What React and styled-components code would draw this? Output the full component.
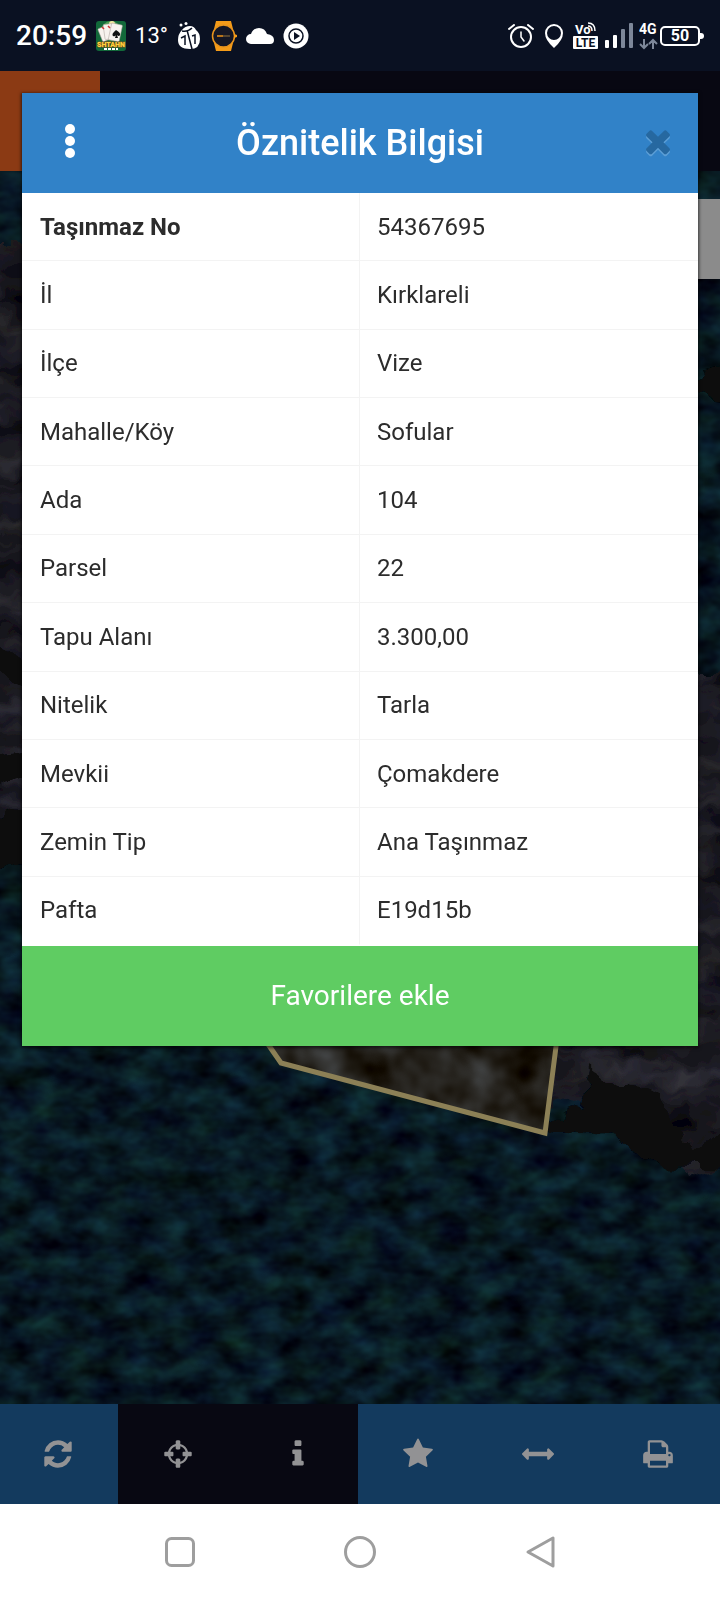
import React from "react";
import styled, { createGlobalStyle } from "styled-components";

const GlobalStyle = createGlobalStyle`
  *, *::before, *::after { box-sizing: border-box; }
  body { margin: 0; background: #070f14; font-family: Roboto, "Noto Sans", sans-serif; }
  button { font: inherit; border: 0; margin: 0; padding: 0; cursor: pointer; }
  svg { display: block; }
`;

const Screen = styled.div`
  min-height: 100vh;
  display: flex;
  flex-direction: column;
`;

const StatusBar = styled.header`
  height: 71px;
  flex: none;
  display: flex;
  align-items: center;
  justify-content: space-between;
  padding: 0 16px;
  background: #0a1122;
  color: #fff;
`;

const StatusGroup = styled.div`
  display: flex;
  align-items: center;
  gap: ${(p) => p.$gap}px;
`;

const Clock = styled.time`
  font-size: 28px;
  line-height: 32px;
  font-weight: 500;
`;

const Temperature = styled.span`
  font-size: 22px;
  line-height: 32px;
`;

const Battery = styled.span`
  position: relative;
  display: flex;
  align-items: center;
  justify-content: center;
  width: 40px;
  height: 20px;
  margin-right: 4px;
  border: 2px solid #fff;
  border-radius: 5px;
  font-size: 16px;
  line-height: 16px;
  font-weight: 700;

  &::after {
    content: "";
    position: absolute;
    right: -6px;
    top: 5px;
    width: 4px;
    height: 6px;
    border-radius: 0 3px 3px 0;
    background: #fff;
  }
`;

const Viewport = styled.div`
  position: relative;
  flex: 1;
  display: flex;
  flex-direction: column;
`;

const AppHeader = styled.div`
  height: 100px;
  flex: none;
  background: #080812;
`;

const MenuTile = styled.div`
  width: 100px;
  height: 100px;
  background: #8b3a14;
`;

const MapArea = styled.div`
  position: relative;
  flex: 1;
  min-height: 1000px;
  overflow: hidden;
  background: #07161c;
`;

const MapDrawing = styled.svg`
  position: absolute;
  inset: 0;
  width: 100%;
  height: 100%;
`;

const MapControl = styled.div`
  position: absolute;
  top: 28px;
  right: 0;
  width: 80px;
  height: 80px;
  background: #8b8b8b;
`;

const Toolbar = styled.nav`
  flex: none;
  display: grid;
  grid-template-columns: repeat(6, 1fr);
  height: 100px;
  margin-left: -2px;
  padding-right: 2px;
  background: #133a5e;
`;

const ToolButton = styled.button`
  display: flex;
  align-items: center;
  justify-content: center;
  background: ${(p) => (p.$dark ? "#080812" : "#133a5e")};
  color: #929294;
`;

const Dialog = styled.section`
  position: absolute;
  top: 22px;
  left: 22px;
  right: 22px;
  background: #fff;
  box-shadow: 0 1px 3px 1px rgba(0, 0, 0, 0.6);
`;

const DialogHeader = styled.div`
  display: grid;
  grid-template-columns: 96px 1fr 80px;
  align-items: center;
  height: 100px;
  background: #3182c8;
  color: #fff;
`;

const DialogTitle = styled.h1`
  margin: 0;
  padding-right: 16px;
  text-align: center;
  font-size: 36px;
  line-height: 40px;
  font-weight: 500;
`;

const HeaderButton = styled.button`
  display: flex;
  align-items: center;
  justify-content: center;
  height: 100px;
  && { padding-bottom: 4px; }
  background: transparent;
  color: ${(p) => p.$color};
`;

const CloseGlyph = styled.span`
  filter: drop-shadow(0 2px 0 #5c9ed6);
`;

const DialogBody = styled.div`
  padding-bottom: 1px;
`;

const Attributes = styled.table`
  width: 100%;
  height: 752px;
  table-layout: fixed;
  border-collapse: separate;
  border-spacing: 0;
  color: #2c2c2c;
`;

const cell = `
  padding: 0 0 0 18px;
  text-align: left;
  font-size: 24px;
  line-height: 32px;
  border-bottom: 1px solid #f3f3f3;
`;

const Name = styled.th`
  ${cell}
  font-weight: ${(p) => (p.$strong ? 700 : 400)};
  border-right: 1px solid #f3f3f3;
`;

const Value = styled.td`
  ${cell}
  padding-left: 17px;
`;

const Row = styled.tr`
  &:last-child > * {
    border-bottom-color: transparent;
  }
`;

const FavoriteButton = styled.button`
  display: block;
  width: 100%;
  height: 100px;
  background: #5fcc62;
  color: #fff;
  && { font-size: 28px; line-height: 32px; }
`;

const SystemNav = styled.nav`
  flex: none;
  display: flex;
  justify-content: center;
  height: 96px;
  background: #fff;
`;

const NavButton = styled.button`
  display: flex;
  align-items: center;
  justify-content: center;
  width: 25%;
  background: transparent;
`;

const icons = {
  refresh:
    "M1639 1056q0 5-1 7-64 268-268 434.500t-478 166.500q-146 0-282.500-55t-243.500-157l-129 129q-19 19-45 19t-45-19-19-45v-448q0-26 19-45t45-19h448q26 0 45 19t19 45-19 45l-137 137q71 66 161 102t187 36q134 0 250-65t186-179q11-17 53-117 8-23 30-23h192q13 0 22.500 9.500t9.500 22.500zm25-800v448q0 26-19 45t-45 19h-448q-26 0-45-19t-19-45 19-45l138-138q-148-137-349-137-134 0-250 65t-186 179q-11 17-53 117-8 23-30 23h-199q-13 0-22.500-9.500t-9.500-22.500v-7q65-268 270-434.500t480-166.500q146 0 284 55.500t245 156.500l130-129q19-19 45-19t45 19 19 45z",
  crosshairs:
    "M1325 1024h-109q-26 0-45-19t-19-45v-128q0-26 19-45t45-19h109q-32-108-112.500-188.500t-188.500-112.500v109q0 26-19 45t-45 19h-128q-26 0-45-19t-19-45v-109q-108 32-188.500 112.500t-112.500 188.500h109q26 0 45 19t19 45v128q0 26-19 45t-45 19h-109q32 108 112.500 188.500t188.500 112.500v-109q0-26 19-45t45-19h128q26 0 45 19t19 45v109q108-32 188.500-112.500t112.500-188.500zm339-192v128q0 26-19 45t-45 19h-143q-37 161-154.500 278.500t-278.500 154.500v143q0 26-19 45t-45 19h-128q-26 0-45-19t-19-45v-143q-161-37-278.500-154.500t-154.500-278.500h-143q-26 0-45-19t-19-45v-128q0-26 19-45t45-19h143q37-161 154.500-278.500t278.500-154.500v-143q0-26 19-45t45-19h128q26 0 45 19t19 45v143q161 37 278.500 154.500t154.500 278.500h143q26 0 45 19t19 45z",
  info: "M1216 1344v128q0 26-19 45t-45 19h-512q-26 0-45-19t-19-45v-128q0-26 19-45t45-19h64v-384h-64q-26 0-45-19t-19-45v-128q0-26 19-45t45-19h384q26 0 45 19t19 45v576h64q26 0 45 19t19 45zm-128-1152v192q0 26-19 45t-45 19h-256q-26 0-45-19t-19-45v-192q0-26 19-45t45-19h256q26 0 45 19t19 45z",
  star: "M1728 647q0 22-26 48l-363 354 86 500q1 7 1 20 0 21-10.500 35.500t-30.500 14.500q-19 0-40-12l-449-236-449 236q-22 12-40 12-21 0-31.500-14.500t-10.500-35.500q0-6 2-20l86-500-364-354q-25-27-25-48 0-37 56-46l502-73 225-455q19-41 49-41t49 41l225 455 502 73q56 9 56 46z",
  measure:
    "M1792 896q0 26-19 45l-256 256q-19 19-45 19t-45-19-19-45v-128h-1024v128q0 26-19 45t-45 19-45-19l-256-256q-19-19-19-45t19-45l256-256q19-19 45-19t45 19 19 45v128h1024v-128q0-26 19-45t45-19 45 19l256 256q19 19 19 45z",
  print:
    "M448 1536h896v-256h-896v256zm0-640h896v-384h-160q-40 0-68-28t-28-68v-160h-640v640zm1152 64q0-26-19-45t-45-19-45 19-19 45 19 45 45 19 45-19 19-45zm128 0v416q0 13-9.500 22.500t-22.500 9.500h-224v160q0 40-28 68t-68 28h-960q-40 0-68-28t-28-68v-160h-224q-13 0-22.500-9.500t-9.500-22.500v-416q0-79 56.500-135.500t135.500-56.500h64v-544q0-40 28-68t68-28h672q40 0 88 20t76 48l152 152q28 28 48 76t20 88v256h64q79 0 135.500 56.500t56.500 135.500z",
  close:
    "M1490 1322q0 40-28 68l-136 136q-28 28-68 28t-68-28l-294-294-294 294q-28 28-68 28t-68-28l-136-136q-28-28-28-68t28-68l294-294-294-294q-28-28-28-68t28-68l136-136q28-28 68-28t68 28l294 294 294-294q28-28 68-28t68 28l136 136q28 28 28 68t-28 68l-294 294 294 294q28 28 28 68z",
};

function Icon({ name, size = 32 }) {
  return (
    <svg width={size} height={size} viewBox="0 0 1792 1792" fill="currentColor" aria-hidden="true">
      <path d={icons[name]} />
    </svg>
  );
}

function CardGameIcon() {
  return (
    <svg width="30" height="30" viewBox="0 0 30 30" aria-hidden="true">
      <rect width="30" height="30" rx="3" fill="#12693a" />
      <circle cx="15" cy="10" r="10" fill="#4f9d55" />
      <circle cx="16" cy="3" r="3" fill="#f3e7a0" />
      <g fill="#f7f2ee" stroke="#a9a09a" strokeWidth=".5">
        <rect x="4" y="6" width="9" height="14" rx="1" transform="rotate(-22 8 13)" />
        <rect x="8" y="3" width="10" height="15" rx="1" transform="rotate(-8 13 10)" />
        <rect x="14" y="3" width="11" height="17" rx="1" transform="rotate(12 20 11)" />
      </g>
      <path d="M20 9q-5 4-3 6 2 1 3-1l-1 3h3l-1-3q2 2 3 0 1-2-4-5z" fill="#111" />
      <path d="M6 6l2 2M12 5l2 2" stroke="#c33" strokeWidth="1.500" />
      <text x="15" y="26" textAnchor="middle" fontSize="7" fontWeight="900" fill="#ffd43c" stroke="#87501c" strokeWidth="1" paintOrder="stroke" fontFamily="Roboto, sans-serif">SHTAHN</text>
      <path d="M8 28h14" stroke="#fff" strokeWidth="2" strokeDasharray="3 1" />
    </svg>
  );
}

function BeetleIcon() {
  return (
    <svg width="23" height="28" viewBox="0 0 23 28" aria-hidden="true">
      <path d="M5 8q3-4 8-4 4 0 6 4 4 3 4 9 0 10-10 10Q1 27 1 18 1 12 5 8z" fill="#fff" />
      <path d="M5 9q6 1 10-3M10 8l5 19M4 16l4-2v9M15 14l3-1v9" fill="none" stroke="#0a1122" strokeWidth="1.500" />
      <circle cx="4" cy="3" r="1.500" fill="#fff" />
      <circle cx="9" cy="1.500" r="1.500" fill="#fff" />
    </svg>
  );
}

function WatchIcon() {
  return (
    <svg width="28" height="32" viewBox="-2 0 28 32" aria-hidden="true">
      <path d="M5 1h15l2 8H3zM3 23h19l-2 8H5z" fill="#f49b18" />
      <circle cx="12.500" cy="16" r="11" fill="#151724" stroke="#e9941d" strokeWidth="1.500" />
      <path d="M23 14l3 1v2l-3 1z" fill="#f49b18" />
      <path d="M6 16h6" stroke="#b87419" strokeWidth="2" />
      <path d="M12 16h7" stroke="#55452f" strokeWidth="2" />
    </svg>
  );
}

function CloudIcon() {
  return (
    <svg width="28" height="16" viewBox="0 0 28 16" fill="#fff" aria-hidden="true">
      <path d="M5 16a5 5 0 0 1 0-10q2-6 8-6 6 0 8 6 7 1 7 6 0 4-4 4z" />
    </svg>
  );
}

function PlayIcon() {
  return (
    <svg width="26" height="26" viewBox="0 0 26 26" aria-hidden="true">
      <circle cx="13" cy="13" r="12.500" fill="#fff" />
      <circle cx="13" cy="13" r="7" fill="none" stroke="#0a1122" strokeWidth="1.500" />
      <path d="M11 9l6 4-6 4z" fill="#0a1122" />
    </svg>
  );
}

function AlarmIcon() {
  return (
    <svg width="30" height="24" viewBox="0 0 30 24" fill="none" stroke="#fff" strokeWidth="2" strokeLinecap="round" aria-hidden="true">
      <circle cx="14" cy="13" r="10" />
      <path d="M2 5l5-4M21 1l5 4" />
      <path d="M14 8v5l3 4" strokeWidth="1.500" />
    </svg>
  );
}

function PinIcon() {
  return (
    <svg width="24" height="26" viewBox="-1 0 24 26" aria-hidden="true">
      <path d="M10 1a9 9 0 0 0-9 9q0 7 9 15 9-8 9-15a9 9 0 0 0-9-9zm0 2a7 7 0 0 1 0 14 7 7 0 0 1 0-14z" fill="#fff" fillRule="evenodd" />
    </svg>
  );
}

function VolteIcon() {
  return (
    <svg width="26" height="28" viewBox="0 0 26 28" fontFamily="Roboto, sans-serif" fontWeight="700" aria-hidden="true">
      <text x="2" y="12" fontSize="13" fill="#fff">Vo</text>
      <path d="M15 4q4 0 4 5M15 1q7 0 7 8" fill="none" stroke="#fff" strokeWidth="1.500" />
      <rect y="14" width="25" height="13" rx="1" fill="#fff" />
      <text x="12.500" y="25" textAnchor="middle" fontSize="12" fill="#0a1122">LTE</text>
    </svg>
  );
}

function SignalIcon() {
  return (
    <svg width="28" height="26" viewBox="0 0 28 26" aria-hidden="true">
      <rect y="17" width="4" height="8" rx="1" fill="#fff" />
      <rect x="8" y="12" width="4" height="13" rx="1" fill="#fff" />
      <rect x="16" y="6" width="4" height="19" rx="1" fill="#7d8799" />
      <rect x="24" width="4" height="25" rx="1" fill="#7d8799" />
    </svg>
  );
}

function NetworkIcon() {
  return (
    <svg width="19" height="30" viewBox="0 0 19 30" aria-hidden="true">
      <text x="0" y="13" fontSize="14" fontWeight="700" fill="#fff" fontFamily="Roboto, sans-serif">4G</text>
      <path d="M5 18v9M1 23l4 4 4-4M14 28v-9M10 23l4-4 4 4" fill="none" stroke="#7d8799" strokeWidth="2" />
    </svg>
  );
}

function Terrain() {
  return (
    <MapDrawing viewBox="0 0 720 1233" preserveAspectRatio="xMidYMid slice" aria-hidden="true">
      <defs>
        <filter id="canopy" x="0" y="0" width="100%" height="100%" colorInterpolationFilters="sRGB">
          <feTurbulence type="fractalNoise" baseFrequency="0.032 0.048" numOctaves="3" seed="8" />
          <feColorMatrix values="0.09 0 0 0 -0.015  0.27 0 0.04 0 -0.060  0.25 0.12 0 0 -0.055  0 0 0 0 1" />
        </filter>
        <filter id="soil" x="0" y="0" width="100%" height="100%" colorInterpolationFilters="sRGB">
          <feTurbulence type="fractalNoise" baseFrequency="0.014 0.036" numOctaves="3" seed="14" />
          <feColorMatrix values="0.26 0 0 0 -0.025  0.26 0 0 0 -0.028  0.24 0.06 0 0 -0.020  0 0 0 0 1" />
          <feComposite in2="SourceGraphic" operator="in" />
        </filter>
        <filter id="parcelSoil" x="0" y="0" width="100%" height="100%" colorInterpolationFilters="sRGB">
          <feTurbulence type="fractalNoise" baseFrequency="0.022 0.022" numOctaves="3" seed="3" />
          <feColorMatrix values="0.36 0 0 0 -0.030  0.42 0 0 0 -0.070  0.50 0 0 0 -0.130  0 0 0 0 1" />
          <feComposite in2="SourceGraphic" operator="in" />
        </filter>
        <filter id="ragged" x="-10%" y="-10%" width="120%" height="120%">
          <feTurbulence type="fractalNoise" baseFrequency="0.05" numOctaves="2" seed="5" />
          <feDisplacementMap in="SourceGraphic" scale="24" xChannelSelector="R" yChannelSelector="G" />
        </filter>
      </defs>
      <rect width="720" height="1233" filter="url(#canopy)" />
      <g filter="url(#ragged)">
        <path d="M-20 76H60V640L-20 680z" filter="url(#soil)" />
        <path d="M-20 460L40 500V520L-20 490zM-20 590L40 580V600L-20 620zM-20 655L40 630V690L-20 700zM690 205L750 190V230L690 222z" fill="#07090b" />
        <path d="M540 500H750V980L690 1010 664 954 590 898 584 930 540 936z" filter="url(#soil)" />
        <path d="M540 950L584 936 590 896 606 908 660 924 690 978 740 954V998L660 996 612 966 550 962z" fill="#08090c" />
      </g>
      <path d="M262 866L281 892 545 963 557 866z" filter="url(#parcelSoil)" />
      <path d="M263 866L281 892 545 962 558 860" fill="none" stroke="#8c8056" strokeWidth="5" />
    </MapDrawing>
  );
}

const attributes = [
  ["Taşınmaz No", "54367695"],
  ["İl", "Kırklareli"],
  ["İlçe", "Vize"],
  ["Mahalle/Köy", "Sofular"],
  ["Ada", "104"],
  ["Parsel", "22"],
  ["Tapu Alanı", "3.300,00"],
  ["Nitelik", "Tarla"],
  ["Mevkii", "Çomakdere"],
  ["Zemin Tip", "Ana Taşınmaz"],
  ["Pafta", "E19d15b"],
];

const tools = [
  { icon: "refresh", label: "Yenile" },
  { icon: "crosshairs", label: "Konum", dark: true },
  { icon: "info", label: "Bilgi", dark: true },
  { icon: "star", label: "Favoriler" },
  { icon: "measure", label: "Ölçüm" },
  { icon: "print", label: "Yazdır" },
];

export default function App() {
  return (
    <Screen>
      <GlobalStyle />
      <StatusBar>
        <StatusGroup $gap={9}>
          <Clock>20:59</Clock>
          <CardGameIcon />
          <Temperature>13°</Temperature>
          <BeetleIcon />
          <WatchIcon />
          <CloudIcon />
          <PlayIcon />
        </StatusGroup>
        <StatusGroup $gap={6}>
          <AlarmIcon />
          <PinIcon />
          <VolteIcon />
          <SignalIcon />
          <StatusGroup $gap={2}>
            <NetworkIcon />
            <Battery>50</Battery>
          </StatusGroup>
        </StatusGroup>
      </StatusBar>

      <Viewport>
        <AppHeader>
          <MenuTile />
        </AppHeader>
        <MapArea>
          <Terrain />
          <MapControl />
        </MapArea>
        <Toolbar>
          {tools.map((tool) => (
            <ToolButton key={tool.icon} type="button" aria-label={tool.label} $dark={tool.dark}>
              <Icon name={tool.icon} />
            </ToolButton>
          ))}
        </Toolbar>

        <Dialog role="dialog" aria-labelledby="dialog-title">
          <DialogHeader>
            <HeaderButton type="button" aria-label="Menü" $color="#fff">
              <svg width="10" height="34" viewBox="0 0 10 34" fill="currentColor" aria-hidden="true">
                <circle cx="5" cy="5" r="5" />
                <circle cx="5" cy="17" r="5" />
                <circle cx="5" cy="29" r="5" />
              </svg>
            </HeaderButton>
            <DialogTitle id="dialog-title">Öznitelik Bilgisi</DialogTitle>
            <HeaderButton type="button" aria-label="Kapat" $color="#2668a0">
              <CloseGlyph>
                <Icon name="close" size={36} />
              </CloseGlyph>
            </HeaderButton>
          </DialogHeader>
          <DialogBody>
            <Attributes>
              <tbody>
                {attributes.map(([name, value], index) => (
                  <Row key={name}>
                    <Name scope="row" $strong={index === 0}>{name}</Name>
                    <Value>{value}</Value>
                  </Row>
                ))}
              </tbody>
            </Attributes>
          </DialogBody>
          <FavoriteButton type="button">Favorilere ekle</FavoriteButton>
        </Dialog>
      </Viewport>

      <SystemNav>
        <NavButton type="button" aria-label="Son uygulamalar">
          <svg width="32" height="32" viewBox="0 0 32 32" fill="none" stroke="#9e9e9e" strokeWidth="3" aria-hidden="true">
            <rect x="2.500" y="2.500" width="27" height="27" rx="5" />
          </svg>
        </NavButton>
        <NavButton type="button" aria-label="Ana ekran">
          <svg width="34" height="34" viewBox="0 0 34 34" fill="none" stroke="#9e9e9e" strokeWidth="3" aria-hidden="true">
            <circle cx="17" cy="17" r="14.500" />
          </svg>
        </NavButton>
        <NavButton type="button" aria-label="Geri">
          <svg width="32" height="34" viewBox="0 0 32 34" fill="none" stroke="#9e9e9e" strokeWidth="3" strokeLinejoin="round" aria-hidden="true">
            <path d="M4 17L29 3V31z" />
          </svg>
        </NavButton>
      </SystemNav>
    </Screen>
  );
}
